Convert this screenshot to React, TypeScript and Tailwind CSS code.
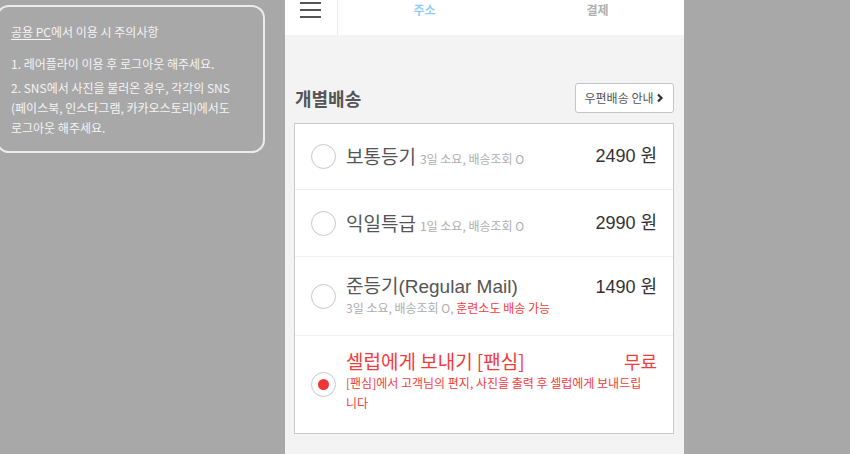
import React from "react";

const font = { fontFamily: '"Noto Sans CJK KR", "Noto Sans", sans-serif' };
const latin = { fontFamily: '"Liberation Sans", "Noto Sans CJK KR", sans-serif' };

function Radio({ checked }: { checked?: boolean }) {
  return (
    <div className="w-[25px] h-[25px] rounded-full border border-[#c8c8c8] bg-white flex items-center justify-center flex-shrink-0">
      {checked && <div className="w-[11px] h-[11px] rounded-full bg-[#f43333]" />}
    </div>
  );
}

export default function App() {
  const rows = [
    { title: "보통등기", sub: "3일 소요, 배송조회 O", price: "2490 원", h: "h-[66px]" },
    { title: "익일특급", sub: "1일 소요, 배송조회 O", price: "2990 원", h: "h-[67px]" },
  ];

  return (
    <div className="relative w-[850px] h-[454px] bg-[#a8a8a8] overflow-hidden pl-[285px]" style={font}>
      {/* Notice box */}
      <div className="absolute left-[-4px] top-[5px] w-[269px] h-[148px] rounded-[13px] border-2 border-[#ececec] pl-[13px] pt-[15px] text-[12px] text-[#f4f4f4] leading-[20px]">
        <div className="mb-[12px]">
          <span className="underline underline-offset-2">공용 PC</span>에서 이용 시 주의사항
        </div>
        <div className="mb-[4px]">1. 레어플라이 이용 후 로그아웃 해주세요.</div>
        <div>
          2. SNS에서 사진을 불러온 경우, 각각의 SNS
          <br />
          (페이스북, 인스타그램, 카카오스토리)에서도
          <br />
          로그아웃 해주세요.
        </div>
      </div>

      <div className="w-[399px] h-full bg-[#f3f3f3] flex flex-col">
        {/* Header */}
        <div className="h-[35px] bg-white flex">
          <div className="w-[53px] border-r border-[#ececec] flex flex-col gap-[5px] pl-[15px] pt-[2px]">
            <div className="w-[21px] h-[2px] bg-[#555]" />
            <div className="w-[21px] h-[2px] bg-[#555]" />
            <div className="w-[21px] h-[2px] bg-[#555]" />
          </div>
          <div className="flex-1 flex justify-center pt-[1px] text-[12px] font-bold text-[#8fcdf6]">주소</div>
          <div className="flex-1 flex justify-center pt-[1px] text-[12px] font-bold text-[#b0b0b0]">결제</div>
        </div>

        {/* Title */}
        <div className="flex items-center justify-between pl-[10px] pr-[10px] mt-[48px] h-[30px]">
          <div className="text-[18px] font-bold text-[#555]">개별배송</div>
          <button className="h-[30px] w-[99px] rounded-[3px] border border-[#c4c4c4] bg-white flex items-center justify-center gap-[3px] text-[12px] text-[#555]">
            우편배송 안내
            <svg width="8" height="10" viewBox="0 0 8 10">
              <path d="M2 1.5 L5.5 5 L2 8.5" stroke="#333" strokeWidth="2.2" fill="none" />
            </svg>
          </button>
        </div>

        {/* List */}
        <div className="mx-[9px] mt-[10px] w-[380px] border border-[#cbcbcb] bg-white">
          {rows.map((r, i) => (
            <div key={i} className={`${r.h} flex items-center px-[16px] border-b border-[#efefef]`}>
              <Radio />
              <div className="ml-[10px] flex-1 flex items-baseline gap-[4px]">
                <span className="text-[19px] text-[#555]">{r.title}</span>
                <span className="text-[12px] text-[#adadad]">{r.sub}</span>
              </div>
              <div className="text-[18px] text-[#333]" style={latin}>{r.price}</div>
            </div>
          ))}
          <div className="h-[79px] flex items-center px-[16px] border-b border-[#efefef]">
            <Radio />
            <div className="ml-[10px] flex-1 flex flex-col">
              <div className="flex justify-between items-center">
                <span className="text-[19px] text-[#555] leading-[24px]" style={latin}>
                  준등기(Regular Mail)
                </span>
                <span className="text-[18px] text-[#333] leading-[24px]" style={latin}>1490 원</span>
              </div>
              <div className="text-[12px] text-[#adadad] leading-[18px]">
                3일 소요, 배송조회 O, <span className="text-[#f43b3b]">훈련소도 배송 가능</span>
              </div>
            </div>
          </div>
          <div className="h-[97px] flex items-center px-[16px]">
            <Radio checked />
            <div className="ml-[10px] flex-1 flex flex-col mt-[-8px]">
              <div className="flex justify-between items-center">
                <span className="text-[19px] text-[#f43b3b] leading-[24px]">셀럽에게 보내기 [팬심]</span>
                <span className="text-[18px] text-[#f43b3b] leading-[24px]">무료</span>
              </div>
              <div className="text-[12px] text-[#f43b3b] leading-[20px] pr-[14px]">
                [팬심]에서 고객님의 편지, 사진을 출력 후 셀럽에게 보내드립니다
              </div>
            </div>
          </div>
        </div>
      </div>
    </div>
  );
}
